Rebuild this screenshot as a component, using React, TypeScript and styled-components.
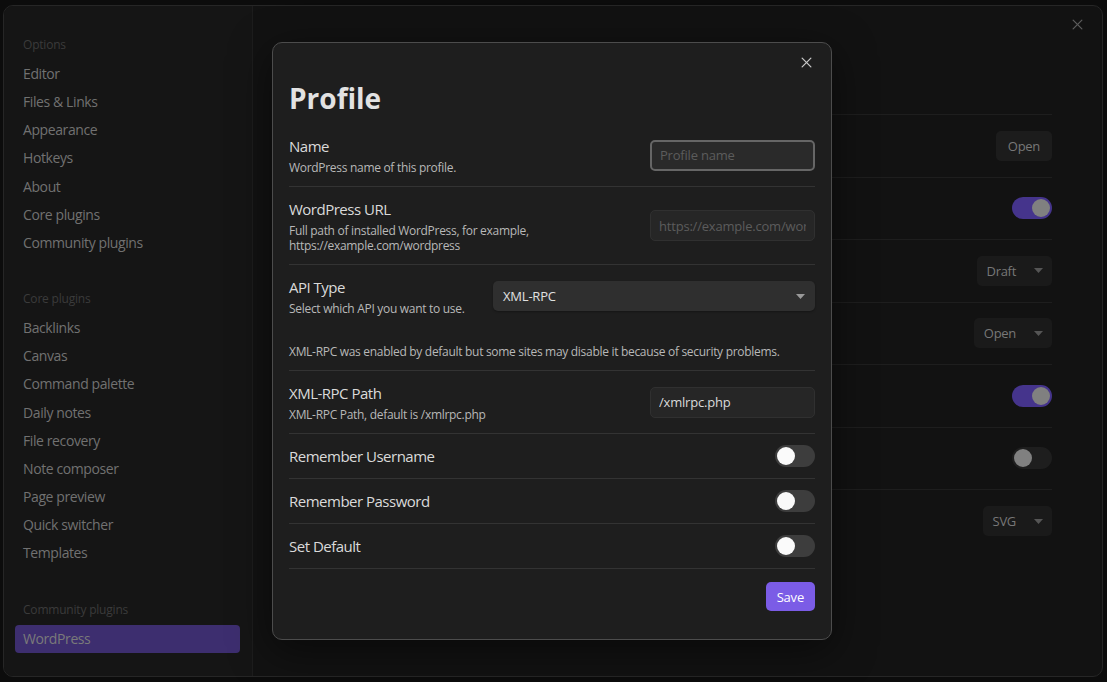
import React from 'react';
import styled, { createGlobalStyle } from 'styled-components';

const GlobalStyle = createGlobalStyle`
  html, body {
    margin: 0;
    padding: 0;
    background: #0c0c0c;
    font-family: 'Open Sans', 'Noto Sans', sans-serif;
  }
  * { box-sizing: border-box; }
`;

const sidebarGroups = [
  {
    title: 'Options',
    items: ['Editor', 'Files & Links', 'Appearance', 'Hotkeys', 'About', 'Core plugins', 'Community plugins'],
  },
  {
    title: 'Core plugins',
    items: ['Backlinks', 'Canvas', 'Command palette', 'Daily notes', 'File recovery', 'Note composer', 'Page preview', 'Quick switcher', 'Templates'],
  },
  {
    title: 'Community plugins',
    items: ['WordPress'],
  },
];

type BgControl =
  | { kind: 'button'; label: string }
  | { kind: 'toggle'; on: boolean }
  | { kind: 'select'; label: string };

const bgRows: BgControl[] = [
  { kind: 'button', label: 'Open' },
  { kind: 'toggle', on: true },
  { kind: 'select', label: 'Draft' },
  { kind: 'select', label: 'Open' },
  { kind: 'toggle', on: true },
  { kind: 'toggle', on: false },
  { kind: 'select', label: 'SVG' },
];

const CloseIcon = ({ size = 14 }: { size?: number }) => (
  <svg width={size} height={size} viewBox="0 0 24 24" fill="none" stroke="currentColor" strokeWidth="2" strokeLinecap="round">
    <line x1="5" y1="5" x2="19" y2="19" />
    <line x1="19" y1="5" x2="5" y2="19" />
  </svg>
);

const Caret = () => (
  <svg width="9" height="5" viewBox="0 0 9 5">
    <polygon points="0,0 9,0 4.5,5" fill="currentColor" />
  </svg>
);

export default function App() {
  return (
    <>
      <GlobalStyle />
      <Stage>
        <SettingsWindow>
          <Sidebar>
            {sidebarGroups.map(group => (
              <NavGroup key={group.title}>
                <NavHeader>{group.title}</NavHeader>
                {group.items.map(item => (
                  <NavItem key={item} $active={item === 'WordPress'}>{item}</NavItem>
                ))}
              </NavGroup>
            ))}
          </Sidebar>
          <MainPane>
            <WindowClose><CloseIcon size={15} /></WindowClose>
            <BgList>
              {bgRows.map((row, i) => (
                <BgRow key={i}>
                  {row.kind === 'button' && <BgButton>{row.label}</BgButton>}
                  {row.kind === 'toggle' && <Toggle $on={row.on} $dim />}
                  {row.kind === 'select' && (
                    <BgSelect>{row.label}<Caret /></BgSelect>
                  )}
                </BgRow>
              ))}
            </BgList>
          </MainPane>
        </SettingsWindow>

        <Backdrop>
          <Modal>
            <ModalClose><CloseIcon size={15} /></ModalClose>
            <Title>Profile</Title>

            <Setting>
              <Info>
                <Label>Name</Label>
                <Desc>WordPress name of this profile.</Desc>
              </Info>
              <TextInput $focused placeholder="Profile name" />
            </Setting>

            <Setting>
              <Info>
                <Label>WordPress URL</Label>
                <Desc>Full path of installed WordPress, for example,<br />https://example.com/wordpress</Desc>
              </Info>
              <TextInput placeholder="https://example.com/wordpress" />
            </Setting>

            <Setting>
              <Info>
                <Label>API Type</Label>
                <Desc>Select which API you want to use.</Desc>
              </Info>
              <Select>XML-RPC<Caret /></Select>
              <Note>XML-RPC was enabled by default but some sites may disable it because of security problems.</Note>
            </Setting>

            <Setting>
              <Info>
                <Label>XML-RPC Path</Label>
                <Desc>XML-RPC Path, default is /xmlrpc.php</Desc>
              </Info>
              <TextInput defaultValue="/xmlrpc.php" />
            </Setting>

            <Setting>
              <Info><Label>Remember Username</Label></Info>
              <Toggle $on={false} />
            </Setting>

            <Setting>
              <Info><Label>Remember Password</Label></Info>
              <Toggle $on={false} />
            </Setting>

            <Setting>
              <Info><Label>Set Default</Label></Info>
              <Toggle $on={false} />
            </Setting>

            <Footer>
              <SaveButton>Save</SaveButton>
            </Footer>
          </Modal>
        </Backdrop>
      </Stage>
    </>
  );
}

const Stage = styled.div`
  position: relative;
  width: 1107px;
  height: 682px;
  padding: 5px 4px 5px 3px;
  overflow: hidden;
`;

const SettingsWindow = styled.div`
  display: flex;
  height: 100%;
  border: 1px solid #262626;
  border-radius: 10px;
  overflow: hidden;
  background: #121212;
`;

const Sidebar = styled.nav`
  width: 249px;
  flex-shrink: 0;
  background: #151515;
  border-right: 1px solid #1d1d1d;
  padding: 30px 12px 0 11px;
  display: flex;
  flex-direction: column;
  gap: 33px;
`;

const NavGroup = styled.div`
  display: flex;
  flex-direction: column;
`;

const NavHeader = styled.div`
  font-size: 12px;
  letter-spacing: -0.2px;
  color: #3b3b3b;
  padding: 0 8px 6px;
  line-height: 18px;
`;

const NavItem = styled.div<{ $active?: boolean }>`
  font-size: 14px;
  letter-spacing: -0.4px;
  line-height: 18.15px;
  padding: 5px 8px;
  border-radius: 4px;
  color: ${p => (p.$active ? '#7a7a7a' : '#717171')};
  background: ${p => (p.$active ? '#3d2e6f' : 'transparent')};
`;

const MainPane = styled.div`
  position: relative;
  flex: 1;
  padding: 108px 50px 0 40px;
`;

const WindowClose = styled.div`
  position: absolute;
  top: 11px;
  right: 17px;
  color: #5a5a5a;
  display: flex;
`;

const BgList = styled.div`
  display: flex;
  flex-direction: column;
  border-top: 1px solid #1e1e1e;
`;

const BgRow = styled.div`
  height: 62.5px;
  display: flex;
  align-items: center;
  justify-content: flex-end;
  border-bottom: 1px solid #1e1e1e;
  &:last-child { border-bottom: none; }
`;

const BgButton = styled.div`
  height: 30px;
  padding: 0 12px;
  display: flex;
  align-items: center;
  background: #1c1c1c;
  border-radius: 5px;
  color: #777;
  font-size: 13px;
  letter-spacing: -0.3px;
`;

const BgSelect = styled.div`
  height: 30px;
  padding: 0 9px 0 10px;
  display: flex;
  align-items: center;
  gap: 18px;
  background: #1a1a1a;
  border-radius: 5px;
  color: #777;
  font-size: 13px;
  letter-spacing: -0.3px;
  svg { color: #555; }
`;

const Toggle = styled.div<{ $on: boolean; $dim?: boolean }>`
  position: relative;
  width: 40px;
  height: 22px;
  border-radius: 11px;
  flex-shrink: 0;
  background: ${p => (p.$on ? '#45348c' : p.$dim ? '#1e1e1e' : '#3d3d3d')};
  &::after {
    content: '';
    position: absolute;
    top: 2px;
    left: ${p => (p.$on ? '20px' : '2px')};
    width: 18px;
    height: 18px;
    border-radius: 50%;
    background: ${p => (p.$dim ? '#808080' : '#fafafa')};
  }
`;

const Backdrop = styled.div`
  position: absolute;
  inset: 0;
  display: flex;
  align-items: center;
  justify-content: center;
  padding-right: 3px;
`;

const Modal = styled.div`
  position: relative;
  width: 560px;
  height: 598px;
  background: #1e1e1e;
  border: 1px solid #4c4c4c;
  border-radius: 10px;
  padding: 35px 16px 16px;
  display: flex;
  flex-direction: column;
  box-shadow: 0 10px 40px rgba(0, 0, 0, 0.5);
`;

const ModalClose = styled.div`
  position: absolute;
  top: 12px;
  right: 17px;
  color: #c8c8c8;
  display: flex;
`;

const Title = styled.h1`
  margin: 0 0 6px;
  font-size: 28px;
  font-weight: 700;
  line-height: 40px;
  color: #e2e2e2;
`;

const Setting = styled.div`
  display: flex;
  flex-wrap: wrap;
  align-items: center;
  gap: 0 16px;
  padding: 11px 0;
  border-bottom: 1px solid #333;
`;

const Info = styled.div`
  flex: 1;
  min-width: 0;
`;

const Label = styled.div`
  font-size: 15px;
  letter-spacing: -0.5px;
  line-height: 22px;
  color: #dadada;
`;

const Desc = styled.div`
  font-size: 12px;
  letter-spacing: -0.3px;
  line-height: 15px;
  color: #b8b8b8;
  margin-top: 3px;
`;

const Note = styled(Desc)`
  flex-basis: 100%;
  margin-top: 28px;
`;

const TextInput = styled.input<{ $focused?: boolean }>`
  width: 165px;
  height: 31px;
  padding: 0 8px;
  border-radius: 5px;
  font-family: inherit;
  font-size: 13px;
  letter-spacing: -0.2px;
  color: #dadada;
  background: ${p => (p.$focused ? '#2a2a2a' : '#262626')};
  border: ${p => (p.$focused ? '2px solid #666' : '1px solid #303030')};
  outline: none;
  &::placeholder { color: #5c5c5c; }
`;

const Select = styled.div`
  width: 322px;
  height: 30px;
  padding: 0 10px;
  display: flex;
  align-items: center;
  justify-content: space-between;
  background: #2f2f2f;
  border-radius: 5px;
  font-size: 13px;
  letter-spacing: -0.2px;
  color: #e0e0e0;
  box-shadow: 0 1px 2px rgba(0, 0, 0, 0.3);
  svg { color: #999; }
`;

const Footer = styled.div`
  display: flex;
  justify-content: flex-end;
  padding-top: 13px;
`;

const SaveButton = styled.button`
  height: 29px;
  padding: 0 11px;
  border: none;
  border-radius: 5px;
  background: #7b5ce6;
  color: #fff;
  font-family: inherit;
  font-size: 13px;
  font-weight: 500;
  letter-spacing: -0.2px;
`;
